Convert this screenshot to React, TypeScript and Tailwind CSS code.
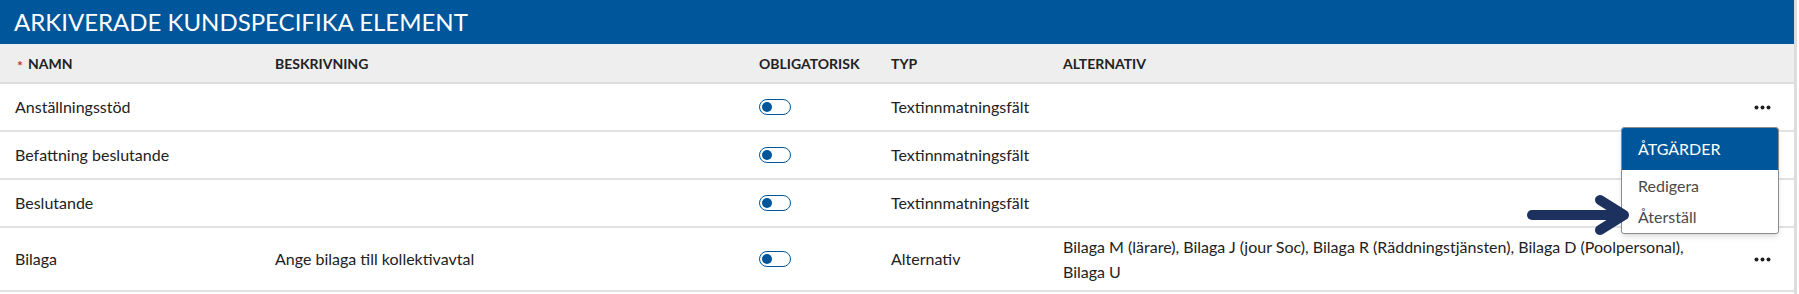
const rows = [
  { name: "Anställningsstöd", desc: "", type: "Textinnmatningsfält", alt: "", tall: false },
  { name: "Befattning beslutande", desc: "", type: "Textinnmatningsfält", alt: "", tall: false },
  { name: "Beslutande", desc: "", type: "Textinnmatningsfält", alt: "", tall: false },
  {
    name: "Bilaga",
    desc: "Ange bilaga till kollektivavtal",
    type: "Alternativ",
    alt: "Bilaga M (lärare), Bilaga J (jour Soc), Bilaga R (Räddningstjänsten), Bilaga D (Poolpersonal), Bilaga U",
    tall: true,
  },
];

function Toggle() {
  return (
    <div className="w-[32px] h-[16px] rounded-full border-[1.5px] border-[#00569a] bg-white flex items-center pl-[2px]">
      <div className="w-[10px] h-[10px] rounded-full bg-[#00569a]" />
    </div>
  );
}

function Dots() {
  return (
    <svg width="17" height="5" viewBox="0 0 17 5" className="ml-[15px]">
      <circle cx="2.5" cy="2.5" r="2" fill="#1f1f1f" />
      <circle cx="8.5" cy="2.5" r="2" fill="#1f1f1f" />
      <circle cx="14.5" cy="2.5" r="2" fill="#1f1f1f" />
    </svg>
  );
}

export default function App() {
  return (
    <div className="relative w-[1797px] h-[294px] border-r-[3px] border-[#dddddd] bg-white font-['Lato',sans-serif] text-[#222222]">
      {/* titel */}
      <div className="h-[44px] bg-[#00569a] pl-[14px] flex items-center text-white text-[24px]">
        ARKIVERADE KUNDSPECIFIKA ELEMENT
      </div>

      {/* kolumnrubriker */}
      <div className="grid grid-cols-[260px_484px_132px_172px_1fr_40px] items-center h-[40px] px-[15px] bg-[#eeeeee] border-b-2 border-[#dddddd] text-[14px] font-bold uppercase">
        <div className="flex items-center">
          <span className="text-[#c0392b] text-[14px] leading-none ml-[2px] mr-[5px] translate-y-[3px]">*</span>
          Namn
        </div>
        <div>Beskrivning</div>
        <div>Obligatorisk</div>
        <div>Typ</div>
        <div>Alternativ</div>
        <div />
      </div>

      {rows.map((r) => (
        <div
          key={r.name}
          className={`grid grid-cols-[260px_484px_132px_172px_1fr_40px] items-center px-[15px] border-b-2 border-[#e2e2e2] text-[16px] ${
            r.tall ? "h-[64px]" : "h-[48px]"
          }`}
        >
          <div>{r.name}</div>
          <div>{r.desc}</div>
          <div>
            <Toggle />
          </div>
          <div>{r.type}</div>
          <div className="leading-[25px] pr-[40px]">{r.alt}</div>
          <div className="flex items-center">
            <Dots />
          </div>
        </div>
      ))}

      {/* åtgärdsmeny */}
      <div className="absolute left-[1621px] top-[127px] w-[158px] h-[107px] rounded-[3px] border border-[#8c8c8c] bg-white shadow-md overflow-hidden">
        <div className="h-[42px] bg-[#00569a] text-white text-[16px] flex items-center px-[16px]">ÅTGÄRDER</div>
        <div className="h-[31px] flex items-center px-[16px] text-[16px] text-[#4a4a4a]">Redigera</div>
        <div className="h-[32px] flex items-center px-[16px] text-[16px] text-[#4a4a4a]">Återställ</div>
      </div>

      {/* pil */}
      <svg className="absolute left-[1520px] top-[190px]" width="115" height="50" viewBox="0 0 115 50">
        <path d="M12 25 L103 25" stroke="#1c315e" strokeWidth="10" strokeLinecap="round" fill="none" />
        <path d="M80 10 L104 25 L80 40" stroke="#1c315e" strokeWidth="10" strokeLinecap="round" strokeLinejoin="round" fill="none" />
      </svg>
    </div>
  );
}
